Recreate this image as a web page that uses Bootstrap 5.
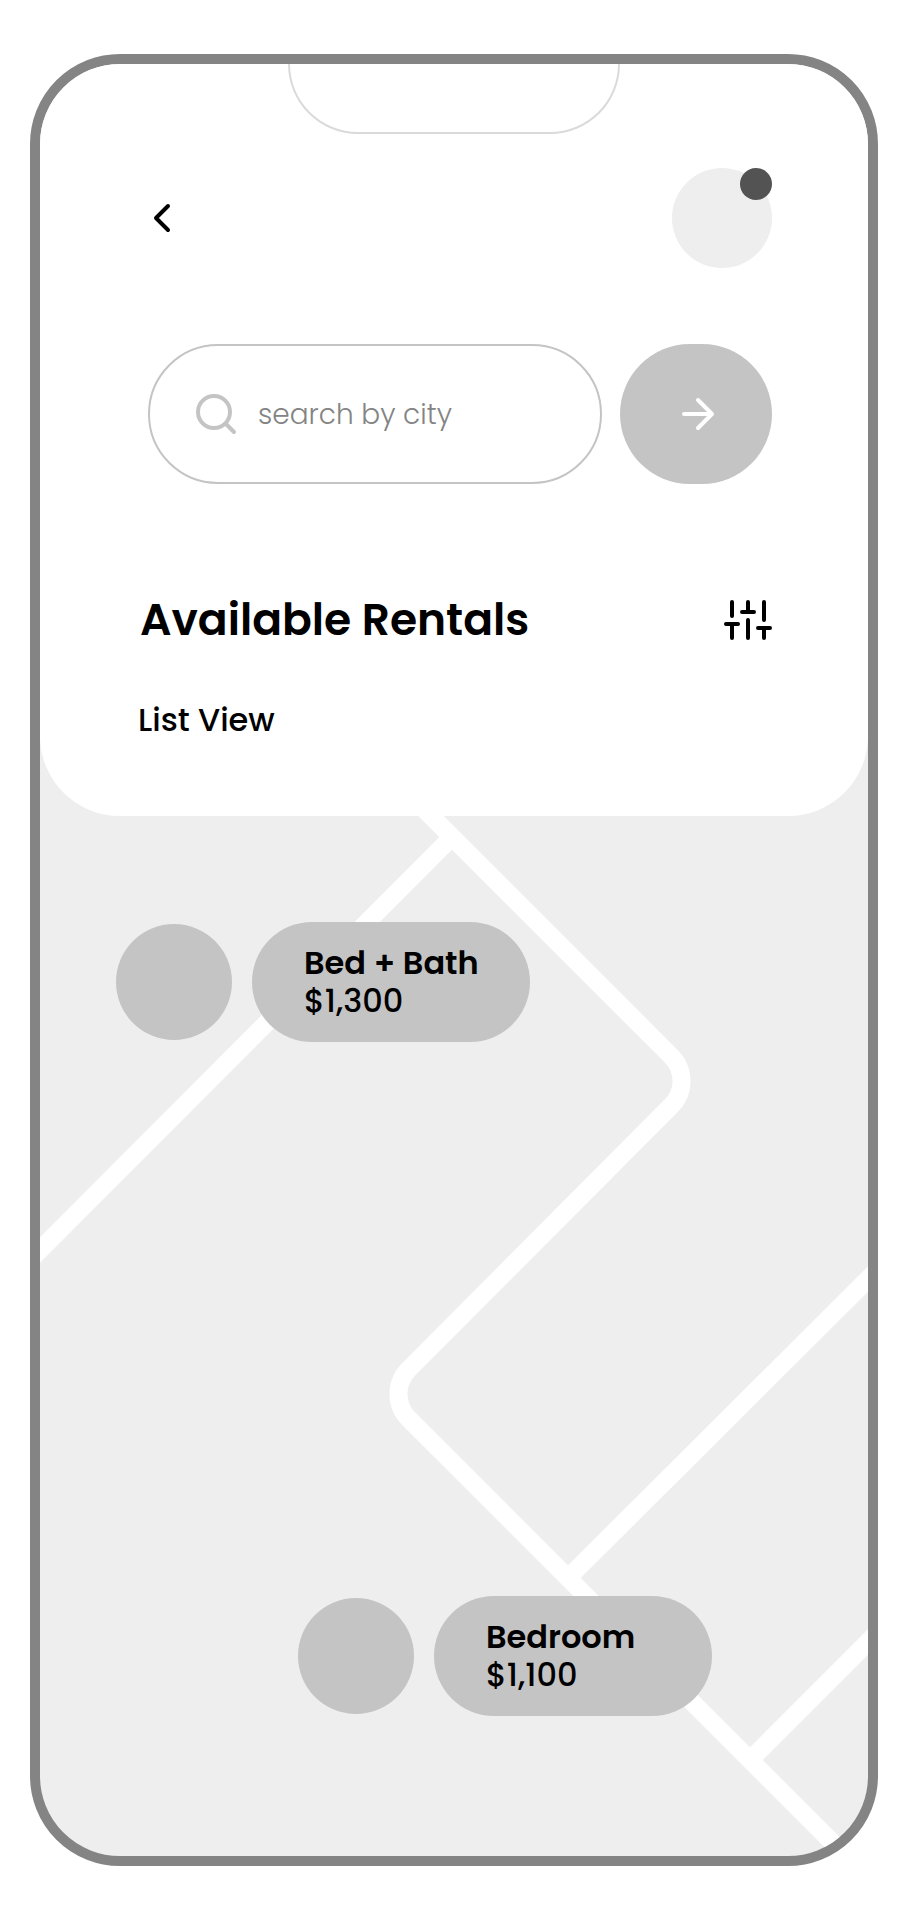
<!DOCTYPE html>
<html lang="en">
<head>
<meta charset="utf-8">
<meta name="viewport" content="width=device-width, initial-scale=1">
<title>Available Rentals</title>
<link href="https://cdn.jsdelivr.net/npm/bootstrap@5.3.0/dist/css/bootstrap.min.css" rel="stylesheet">
<style>
  body { font-family: Poppins, Inter, "Liberation Sans", sans-serif; color: #000; background: #fff; }
  svg { display: block; flex: none; }
  .stage { min-height: 100vh; padding: 54px 30px; }
  .phone { border: 10px solid #848484; border-radius: 90px; background: #eee; }
  .panel { border-radius: 0 0 80px 80px; padding-bottom: 74px; }
  .notch { width: 40%; height: 70px; border: 2px solid #dadada; border-top: 0; border-radius: 0 0 70px 70px; }
  .bar { padding: 0 96px 0 108px; }
  .topbar { margin-top: 34px; }
  .titles { padding: 0 96px 0 98px; }
  .bare { border: 0; background: none; padding: 0; color: inherit; }
  .avatar { width: 100px; height: 100px; background: #eee; }
  .dot { width: 32px; height: 32px; background: #535353; }
  .searchbar { margin-top: 76px; gap: 18px; }
  .field { height: 140px; border: 2px solid #c4c4c4; padding: 0 40px 0 44px; gap: 20px; color: #c4c4c4; min-width: 0; }
  .field input { outline: 0; font-size: 28px; font-weight: 300; line-height: 40px; min-width: 0; padding-top: 2px; }
  .field input::placeholder { color: #848484; opacity: 1; }
  .go { flex: 0 0 152px; height: 140px; border-radius: 70px; background: #c4c4c4; color: #fff; }
  .heading { font-size: 44px; font-weight: 600; line-height: 60px; padding-left: 2px; }
  .titlebar { margin-top: 106px; }
  .view { font-size: 32px; font-weight: 500; line-height: 44px; margin-top: 48px; color: #000; }
  .map { min-height: 1000px; }
  .pin { gap: 20px; color: #000; text-align: left; }
  .spot { width: 116px; height: 116px; background: #c4c4c4; }
  .tag { width: 278px; height: 120px; padding: 0 0 0 52px; background: #c4c4c4; font-size: 32px; line-height: 38px; font-weight: 500; }
  .tag strong { font-weight: 600; }
  .pin-bath { left: 76px; top: 106px; }
  .pin-bed { left: 258px; top: 780px; }
</style>
</head>
<body>
<div class="stage d-flex">
  <main class="phone flex-grow-1 d-flex flex-column overflow-hidden">
    <header class="panel bg-white">
      <div class="notch mx-auto"></div>
      <div class="bar topbar d-flex justify-content-between align-items-center">
        <button class="bare" type="button" aria-label="Back">
          <svg width="28" height="40" viewBox="0 0 28 40" fill="none" stroke="currentColor" stroke-width="4" stroke-linecap="round" stroke-linejoin="round"><path d="M20 8 8 20l12 12"/></svg>
        </button>
        <button class="bare avatar rounded-circle position-relative" type="button" aria-label="Profile">
          <span class="dot rounded-circle position-absolute top-0 end-0"></span>
        </button>
      </div>
      <form class="bar searchbar d-flex">
        <label class="field rounded-pill flex-grow-1 d-flex align-items-center">
          <svg width="44" height="44" viewBox="0 0 44 44" fill="none" stroke="currentColor" stroke-width="4" stroke-linecap="round"><circle cx="20" cy="20" r="16"/><path d="m32 32 8 8"/></svg>
          <input class="bare w-100" type="text" placeholder="search by city" aria-label="search by city">
        </label>
        <button class="bare go d-flex align-items-center justify-content-center" type="button" aria-label="Search">
          <svg width="40" height="40" viewBox="0 0 40 40" fill="none" stroke="currentColor" stroke-width="4" stroke-linecap="round" stroke-linejoin="round"><path d="M8 20h28M22 6l14 14-14 14"/></svg>
        </button>
      </form>
      <div class="titles">
        <div class="titlebar d-flex justify-content-between align-items-center">
          <h1 class="heading mb-0">Available Rentals</h1>
          <button class="bare" type="button" aria-label="Filters">
            <svg width="48" height="40" viewBox="0 0 48 40" fill="none" stroke="currentColor" stroke-width="4" stroke-linecap="round"><path d="M8 2v14M2 24h12M8 24v14M24 2v10M18 12h12M24 20v18M40 2v18M34 28h12M40 28v10"/></svg>
          </button>
        </div>
        <a class="view d-inline-block text-decoration-none" href="#">List View</a>
      </div>
    </header>
    <section class="map flex-grow-1 position-relative" aria-label="Map">
      <svg class="position-absolute top-0 start-0 w-100 h-100" viewBox="40 816 828 1040" preserveAspectRatio="xMidYMid slice" fill="none" stroke="#fff" stroke-width="18">
        <path d="M415 800 671 1056A35 35 0 0 1 671 1106L409 1369A35 35 0 0 0 409 1419L870 1880"/>
        <path d="M452 837 20 1270M568 1578 888 1259M750 1760 888 1622"/>
      </svg>
      <button class="bare pin pin-bath position-absolute d-flex align-items-center" type="button">
        <span class="spot rounded-circle"></span>
        <span class="tag rounded-pill d-flex flex-column justify-content-center"><strong>Bed + Bath</strong><span>$1,300</span></span>
      </button>
      <button class="bare pin pin-bed position-absolute d-flex align-items-center" type="button">
        <span class="spot rounded-circle"></span>
        <span class="tag rounded-pill d-flex flex-column justify-content-center"><strong>Bedroom</strong><span>$1,100</span></span>
      </button>
    </section>
  </main>
</div>
<script src="https://cdn.jsdelivr.net/npm/bootstrap@5.3.0/dist/js/bootstrap.bundle.min.js"></script>
</body>
</html>
